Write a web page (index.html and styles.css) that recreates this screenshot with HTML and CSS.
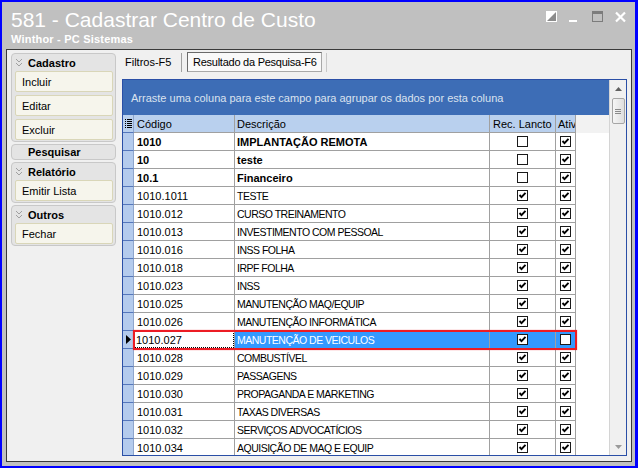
FILE: index.html
```html
<!DOCTYPE html>
<html>
<head>
<meta charset="utf-8">
<link rel="stylesheet" href="styles.css">
</head>
<body>
<div class="win">
  <div class="titlebar">
    <div class="titles">
      <div class="t1">581 - Cadastrar Centro de Custo</div>
      <div class="t2">Winthor - PC Sistemas</div>
    </div>
    <svg class="ctrls" width="81" height="12" viewBox="0 0 81 12">
      <rect x="0" y="0" width="11" height="11" fill="#fff"/>
      <polygon points="10,1 10,10 1,10" fill="#8c8c8c"/>
      <rect x="23" y="9" width="8" height="2" fill="#fff"/>
      <rect x="46.5" y="0.5" width="10" height="10" fill="none" stroke="#7c7c7c"/>
      <rect x="46" y="0" width="11" height="3" fill="#7c7c7c"/>
      <path d="M70 1.5l9 9M79 1.5l-9 9" stroke="#fff" stroke-width="2.2"/>
    </svg>
  </div>
  <div class="frame">
    <div class="left">
      <div class="grp">
        <div class="gh"><svg class="chev" width="8" height="9" viewBox="0 0 8 9"><path d="M1 1l3 3 3-3M1 5l3 3 3-3" fill="none" stroke="#a0a0a0"/></svg><span>Cadastro</span></div>
        <div class="btn">Incluir</div>
        <div class="btn">Editar</div>
        <div class="btn">Excluir</div>
      </div>
      <div class="grp solo">
        <div class="gh nochev"><span>Pesquisar</span></div>
      </div>
      <div class="grp">
        <div class="gh"><svg class="chev" width="8" height="9" viewBox="0 0 8 9"><path d="M1 1l3 3 3-3M1 5l3 3 3-3" fill="none" stroke="#a0a0a0"/></svg><span>Relatório</span></div>
        <div class="btn">Emitir Lista</div>
      </div>
      <div class="grp">
        <div class="gh"><svg class="chev" width="8" height="9" viewBox="0 0 8 9"><path d="M1 1l3 3 3-3M1 5l3 3 3-3" fill="none" stroke="#a0a0a0"/></svg><span>Outros</span></div>
        <div class="btn">Fechar</div>
      </div>
    </div>
    <div class="right">
      <div class="tabs">
        <div class="tab">Filtros-F5</div>
        <div class="tsep"></div>
        <div class="tab active">Resultado da Pesquisa-F6</div>
        <div class="tsep light"></div>
      </div>
      <div class="grid">
        <div class="gmain">
          <div class="gpanel">Arraste uma coluna para este campo para agrupar os dados por esta coluna</div>
          <div class="row head">
            <div class="c ind"><svg width="7" height="9" viewBox="0 0 7 9"><g fill="#000"><rect x="0" y="0" width="1" height="1"/><rect x="2" y="0" width="5" height="1"/><rect x="0" y="2" width="1" height="1"/><rect x="2" y="2" width="5" height="1"/><rect x="0" y="4" width="1" height="1"/><rect x="2" y="4" width="5" height="1"/><rect x="0" y="6" width="1" height="1"/><rect x="2" y="6" width="5" height="1"/><rect x="0" y="8" width="1" height="1"/><rect x="2" y="8" width="5" height="1"/></g></svg></div>
            <div class="c cod">Código</div>
            <div class="c dsc">Descrição</div>
            <div class="c rec">Rec. Lancto</div>
            <div class="c atv">Ativo</div>
            <div class="c fill"></div>
          </div>
          <div class="gbody">
            <div class="row b"><div class="c ind"></div><div class="c cod">1010</div><div class="c dsc">IMPLANTAÇÃO REMOTA</div><div class="c ck"><svg class="cb" width="11" height="11"><rect x="0.5" y="0.5" width="10" height="10" fill="#fff" stroke="#1a1a1a"/></svg></div><div class="c ck"><svg class="cb" width="11" height="11"><rect x="0.5" y="0.5" width="10" height="10" fill="#fff" stroke="#1a1a1a"/><path d="M2.5 5l2 2.2 4-4.4" fill="none" stroke="#000" stroke-width="1.9"/></svg></div><div class="c fill"></div></div>
            <div class="row b"><div class="c ind"></div><div class="c cod">10</div><div class="c dsc">teste</div><div class="c ck"><svg class="cb" width="11" height="11"><rect x="0.5" y="0.5" width="10" height="10" fill="#fff" stroke="#1a1a1a"/></svg></div><div class="c ck"><svg class="cb" width="11" height="11"><rect x="0.5" y="0.5" width="10" height="10" fill="#fff" stroke="#1a1a1a"/><path d="M2.5 5l2 2.2 4-4.4" fill="none" stroke="#000" stroke-width="1.9"/></svg></div><div class="c fill"></div></div>
            <div class="row b"><div class="c ind"></div><div class="c cod">10.1</div><div class="c dsc">Financeiro</div><div class="c ck"><svg class="cb" width="11" height="11"><rect x="0.5" y="0.5" width="10" height="10" fill="#fff" stroke="#1a1a1a"/></svg></div><div class="c ck"><svg class="cb" width="11" height="11"><rect x="0.5" y="0.5" width="10" height="10" fill="#fff" stroke="#1a1a1a"/><path d="M2.5 5l2 2.2 4-4.4" fill="none" stroke="#000" stroke-width="1.9"/></svg></div><div class="c fill"></div></div>
            <div class="row"><div class="c ind"></div><div class="c cod">1010.1011</div><div class="c dsc">TESTE</div><div class="c ck"><svg class="cb" width="11" height="11"><rect x="0.5" y="0.5" width="10" height="10" fill="#fff" stroke="#1a1a1a"/><path d="M2.5 5l2 2.2 4-4.4" fill="none" stroke="#000" stroke-width="1.9"/></svg></div><div class="c ck"><svg class="cb" width="11" height="11"><rect x="0.5" y="0.5" width="10" height="10" fill="#fff" stroke="#1a1a1a"/><path d="M2.5 5l2 2.2 4-4.4" fill="none" stroke="#000" stroke-width="1.9"/></svg></div><div class="c fill"></div></div>
            <div class="row"><div class="c ind"></div><div class="c cod">1010.012</div><div class="c dsc">CURSO TREINAMENTO</div><div class="c ck"><svg class="cb" width="11" height="11"><rect x="0.5" y="0.5" width="10" height="10" fill="#fff" stroke="#1a1a1a"/><path d="M2.5 5l2 2.2 4-4.4" fill="none" stroke="#000" stroke-width="1.9"/></svg></div><div class="c ck"><svg class="cb" width="11" height="11"><rect x="0.5" y="0.5" width="10" height="10" fill="#fff" stroke="#1a1a1a"/><path d="M2.5 5l2 2.2 4-4.4" fill="none" stroke="#000" stroke-width="1.9"/></svg></div><div class="c fill"></div></div>
            <div class="row"><div class="c ind"></div><div class="c cod">1010.013</div><div class="c dsc">INVESTIMENTO COM PESSOAL</div><div class="c ck"><svg class="cb" width="11" height="11"><rect x="0.5" y="0.5" width="10" height="10" fill="#fff" stroke="#1a1a1a"/><path d="M2.5 5l2 2.2 4-4.4" fill="none" stroke="#000" stroke-width="1.9"/></svg></div><div class="c ck"><svg class="cb" width="11" height="11"><rect x="0.5" y="0.5" width="10" height="10" fill="#fff" stroke="#1a1a1a"/><path d="M2.5 5l2 2.2 4-4.4" fill="none" stroke="#000" stroke-width="1.9"/></svg></div><div class="c fill"></div></div>
            <div class="row"><div class="c ind"></div><div class="c cod">1010.016</div><div class="c dsc">INSS FOLHA</div><div class="c ck"><svg class="cb" width="11" height="11"><rect x="0.5" y="0.5" width="10" height="10" fill="#fff" stroke="#1a1a1a"/><path d="M2.5 5l2 2.2 4-4.4" fill="none" stroke="#000" stroke-width="1.9"/></svg></div><div class="c ck"><svg class="cb" width="11" height="11"><rect x="0.5" y="0.5" width="10" height="10" fill="#fff" stroke="#1a1a1a"/><path d="M2.5 5l2 2.2 4-4.4" fill="none" stroke="#000" stroke-width="1.9"/></svg></div><div class="c fill"></div></div>
            <div class="row"><div class="c ind"></div><div class="c cod">1010.018</div><div class="c dsc">IRPF FOLHA</div><div class="c ck"><svg class="cb" width="11" height="11"><rect x="0.5" y="0.5" width="10" height="10" fill="#fff" stroke="#1a1a1a"/><path d="M2.5 5l2 2.2 4-4.4" fill="none" stroke="#000" stroke-width="1.9"/></svg></div><div class="c ck"><svg class="cb" width="11" height="11"><rect x="0.5" y="0.5" width="10" height="10" fill="#fff" stroke="#1a1a1a"/><path d="M2.5 5l2 2.2 4-4.4" fill="none" stroke="#000" stroke-width="1.9"/></svg></div><div class="c fill"></div></div>
            <div class="row"><div class="c ind"></div><div class="c cod">1010.023</div><div class="c dsc">INSS</div><div class="c ck"><svg class="cb" width="11" height="11"><rect x="0.5" y="0.5" width="10" height="10" fill="#fff" stroke="#1a1a1a"/><path d="M2.5 5l2 2.2 4-4.4" fill="none" stroke="#000" stroke-width="1.9"/></svg></div><div class="c ck"><svg class="cb" width="11" height="11"><rect x="0.5" y="0.5" width="10" height="10" fill="#fff" stroke="#1a1a1a"/><path d="M2.5 5l2 2.2 4-4.4" fill="none" stroke="#000" stroke-width="1.9"/></svg></div><div class="c fill"></div></div>
            <div class="row"><div class="c ind"></div><div class="c cod">1010.025</div><div class="c dsc">MANUTENÇÃO MAQ/EQUIP</div><div class="c ck"><svg class="cb" width="11" height="11"><rect x="0.5" y="0.5" width="10" height="10" fill="#fff" stroke="#1a1a1a"/><path d="M2.5 5l2 2.2 4-4.4" fill="none" stroke="#000" stroke-width="1.9"/></svg></div><div class="c ck"><svg class="cb" width="11" height="11"><rect x="0.5" y="0.5" width="10" height="10" fill="#fff" stroke="#1a1a1a"/><path d="M2.5 5l2 2.2 4-4.4" fill="none" stroke="#000" stroke-width="1.9"/></svg></div><div class="c fill"></div></div>
            <div class="row"><div class="c ind"></div><div class="c cod">1010.026</div><div class="c dsc">MANUTENÇÃO INFORMÁTICA</div><div class="c ck"><svg class="cb" width="11" height="11"><rect x="0.5" y="0.5" width="10" height="10" fill="#fff" stroke="#1a1a1a"/><path d="M2.5 5l2 2.2 4-4.4" fill="none" stroke="#000" stroke-width="1.9"/></svg></div><div class="c ck"><svg class="cb" width="11" height="11"><rect x="0.5" y="0.5" width="10" height="10" fill="#fff" stroke="#1a1a1a"/><path d="M2.5 5l2 2.2 4-4.4" fill="none" stroke="#000" stroke-width="1.9"/></svg></div><div class="c fill"></div></div>
            <div class="row sel"><div class="c ind"><svg width="5" height="9" viewBox="0 0 5 9"><polygon points="0,0 5,4.5 0,9" fill="#000"/></svg></div><div class="c cod"><span class="focus">1010.027</span></div><div class="c dsc">MANUTENÇÃO DE VEICULOS</div><div class="c ck"><svg class="cb" width="11" height="11"><rect x="0.5" y="0.5" width="10" height="10" fill="#fff" stroke="#1a1a1a"/><path d="M2.5 5l2 2.2 4-4.4" fill="none" stroke="#000" stroke-width="1.9"/></svg></div><div class="c ck"><svg class="cb" width="11" height="11"><rect x="0.5" y="0.5" width="10" height="10" fill="#fff" stroke="#1a1a1a"/></svg></div><div class="c fill"></div></div>
            <div class="row"><div class="c ind"></div><div class="c cod">1010.028</div><div class="c dsc">COMBUSTÍVEL</div><div class="c ck"><svg class="cb" width="11" height="11"><rect x="0.5" y="0.5" width="10" height="10" fill="#fff" stroke="#1a1a1a"/><path d="M2.5 5l2 2.2 4-4.4" fill="none" stroke="#000" stroke-width="1.9"/></svg></div><div class="c ck"><svg class="cb" width="11" height="11"><rect x="0.5" y="0.5" width="10" height="10" fill="#fff" stroke="#1a1a1a"/><path d="M2.5 5l2 2.2 4-4.4" fill="none" stroke="#000" stroke-width="1.9"/></svg></div><div class="c fill"></div></div>
            <div class="row"><div class="c ind"></div><div class="c cod">1010.029</div><div class="c dsc">PASSAGENS</div><div class="c ck"><svg class="cb" width="11" height="11"><rect x="0.5" y="0.5" width="10" height="10" fill="#fff" stroke="#1a1a1a"/><path d="M2.5 5l2 2.2 4-4.4" fill="none" stroke="#000" stroke-width="1.9"/></svg></div><div class="c ck"><svg class="cb" width="11" height="11"><rect x="0.5" y="0.5" width="10" height="10" fill="#fff" stroke="#1a1a1a"/><path d="M2.5 5l2 2.2 4-4.4" fill="none" stroke="#000" stroke-width="1.9"/></svg></div><div class="c fill"></div></div>
            <div class="row"><div class="c ind"></div><div class="c cod">1010.030</div><div class="c dsc">PROPAGANDA E MARKETING</div><div class="c ck"><svg class="cb" width="11" height="11"><rect x="0.5" y="0.5" width="10" height="10" fill="#fff" stroke="#1a1a1a"/><path d="M2.5 5l2 2.2 4-4.4" fill="none" stroke="#000" stroke-width="1.9"/></svg></div><div class="c ck"><svg class="cb" width="11" height="11"><rect x="0.5" y="0.5" width="10" height="10" fill="#fff" stroke="#1a1a1a"/><path d="M2.5 5l2 2.2 4-4.4" fill="none" stroke="#000" stroke-width="1.9"/></svg></div><div class="c fill"></div></div>
            <div class="row"><div class="c ind"></div><div class="c cod">1010.031</div><div class="c dsc">TAXAS DIVERSAS</div><div class="c ck"><svg class="cb" width="11" height="11"><rect x="0.5" y="0.5" width="10" height="10" fill="#fff" stroke="#1a1a1a"/><path d="M2.5 5l2 2.2 4-4.4" fill="none" stroke="#000" stroke-width="1.9"/></svg></div><div class="c ck"><svg class="cb" width="11" height="11"><rect x="0.5" y="0.5" width="10" height="10" fill="#fff" stroke="#1a1a1a"/><path d="M2.5 5l2 2.2 4-4.4" fill="none" stroke="#000" stroke-width="1.9"/></svg></div><div class="c fill"></div></div>
            <div class="row"><div class="c ind"></div><div class="c cod">1010.032</div><div class="c dsc">SERVIÇOS ADVOCATÍCIOS</div><div class="c ck"><svg class="cb" width="11" height="11"><rect x="0.5" y="0.5" width="10" height="10" fill="#fff" stroke="#1a1a1a"/><path d="M2.5 5l2 2.2 4-4.4" fill="none" stroke="#000" stroke-width="1.9"/></svg></div><div class="c ck"><svg class="cb" width="11" height="11"><rect x="0.5" y="0.5" width="10" height="10" fill="#fff" stroke="#1a1a1a"/><path d="M2.5 5l2 2.2 4-4.4" fill="none" stroke="#000" stroke-width="1.9"/></svg></div><div class="c fill"></div></div>
            <div class="row"><div class="c ind"></div><div class="c cod">1010.034</div><div class="c dsc">AQUISIÇÃO DE MAQ E EQUIP</div><div class="c ck"><svg class="cb" width="11" height="11"><rect x="0.5" y="0.5" width="10" height="10" fill="#fff" stroke="#1a1a1a"/><path d="M2.5 5l2 2.2 4-4.4" fill="none" stroke="#000" stroke-width="1.9"/></svg></div><div class="c ck"><svg class="cb" width="11" height="11"><rect x="0.5" y="0.5" width="10" height="10" fill="#fff" stroke="#1a1a1a"/><path d="M2.5 5l2 2.2 4-4.4" fill="none" stroke="#000" stroke-width="1.9"/></svg></div><div class="c fill"></div></div>
          </div>
        </div>
        <div class="vscroll">
          <div class="arrow"><svg width="7" height="4" viewBox="0 0 7 4"><polygon points="0,4 3.5,0 7,4" fill="#606060"/></svg></div>
          <div class="thumb"><svg width="6" height="5" viewBox="0 0 6 5"><path d="M0 0.5h6M0 2.5h6M0 4.5h6" stroke="#8a8a8a"/></svg></div>
          <div class="sp"></div>
          <div class="arrow"><svg width="7" height="4" viewBox="0 0 7 4"><polygon points="0,0 3.5,4 7,0" fill="#9a9a9a"/></svg></div>
        </div>
      </div>
    </div>
  </div>
</div>
</body>
</html>
```

FILE: styles.css
```css
html, body {
  margin: 0;
  padding: 0;
}
body {
  font-family: "Liberation Sans", Tahoma, Arial, sans-serif;
  font-size: 11px;
  color: #000;
  background: #0000ff;
}
.win {
  width: 638px;
  height: 468px;
  box-sizing: border-box;
  border: solid #0000ff;
  border-width: 2px 3px 2px 2px;
  background: #c0c0c0;
  padding: 0 3px 4px 4px;
  display: flex;
  flex-direction: column;
}
.titlebar {
  height: 47px;
  flex: none;
  display: flex;
  padding: 0 5px 0 5px;
}
.titles {
  flex: 1;
  padding-top: 6px;
  color: #fff;
}
.t1 {
  font-size: 21px;
  line-height: 24px;
}
.t2 {
  font-weight: bold;
  font-size: 11px;
  line-height: 13px;
  margin-top: 1px;
  letter-spacing: 0.2px;
}
.ctrls {
  margin-top: 9px;
  flex: none;
}
.frame {
  height: 413px;
  flex: none;
  box-sizing: border-box;
  border: 1px solid #3a3a3a;
  background: #f0f0f0;
  display: flex;
}
.left {
  width: 111px;
  flex: none;
  box-sizing: border-box;
  padding: 3px 0 0 4px;
  display: flex;
  flex-direction: column;
  gap: 2px;
}
.grp {
  width: 105px;
  box-sizing: border-box;
  border: 1px solid #c8c8c8;
  border-radius: 4px;
  background: #e4e4e4;
  padding: 0 2px 1px 3px;
  display: flex;
  flex-direction: column;
  gap: 3px;
}
.grp.solo {
  padding-bottom: 0;
}
.gh {
  height: 17px;
  margin-bottom: -3px;
  display: flex;
  align-items: center;
  font-weight: bold;
  font-size: 11px;
}
.solo .gh {
  height: 14px;
  margin-bottom: 0;
  padding-left: 13px;
}
.chev {
  margin-right: 5px;
  flex: none;
}
.btn {
  height: 21px;
  box-sizing: border-box;
  border: 1px solid #d9d6b8;
  border-radius: 2px;
  background: #f6f5ec;
  padding-left: 6px;
  display: flex;
  align-items: center;
}
.right {
  flex: 1;
  min-width: 0;
  box-sizing: border-box;
  padding: 2px 4px 5px 4px;
  display: flex;
  flex-direction: column;
}
.tabs {
  height: 20px;
  flex: none;
  margin-bottom: 7px;
  display: flex;
  align-items: stretch;
}
.tab {
  display: flex;
  align-items: center;
  white-space: nowrap;
}
.tab:first-child {
  width: 56px;
  padding-left: 3px;
}
.tsep {
  width: 1px;
  background: #a0a0a0;
  margin-top: 1px;
}
.tsep.light {
  background: #c8c8c8;
  margin-left: 4px;
}
.tab.active {
  width: 135px;
  box-sizing: border-box;
  margin-left: 5px;
  padding-left: 5px;
  border: 1px solid #a8a8a8;
  border-top-color: #6a6a6a;
  border-left-color: #6a6a6a;
  background: #f9f9f9;
  letter-spacing: -0.25px;
  overflow: hidden;
}
.grid {
  flex: 1;
  min-height: 0;
  border: 1px solid #2a4fa6;
  display: flex;
  overflow: hidden;
  background: #fff;
}
.gmain {
  flex: 1;
  min-width: 0;
  display: flex;
  flex-direction: column;
}
.gpanel {
  height: 35px;
  flex: none;
  background: #3d6db6;
  color: #dbe3ef;
  padding-left: 8px;
  display: flex;
  align-items: center;
  white-space: nowrap;
}
.gbody {
  flex: 1;
  min-height: 0;
  overflow: hidden;
}
.row {
  height: 18px;
  display: grid;
  grid-template-columns: 11px 101px 255px 66px 20px 1fr;
}
.c {
  box-sizing: border-box;
  border-right: 1px solid #a0a0a0;
  border-bottom: 1px solid #a0a0a0;
  display: flex;
  align-items: center;
  white-space: nowrap;
  overflow: hidden;
  background: #fff;
}
.c.ind {
  background: #b4cbed;
  border-right: 1px solid #8fa6cc;
  border-bottom: 1px solid #5577bb;
  padding-left: 2px;
}
.c.fill {
  border: none;
}
.c.cod {
  padding-left: 3px;
}
.c.dsc {
  padding-left: 2px;
}
.row:not(.head):not(.b) .c.dsc {
  font-size: 10.5px;
  letter-spacing: -0.5px;
}
.c.ck {
  justify-content: center;
}
.row.b .c.cod,
.row.b .c.dsc {
  font-weight: bold;
}
.row.head .c {
  background: #b9d0ee;
}
.row.head .c.rec {
  padding-left: 3px;
}
.row.head .c.atv {
  padding-left: 2px;
}
.row.head .c.ind {
  padding-left: 2px;
}
.row.head .c.fill {
  background: #f2f2f2;
}
.row.sel {
  position: relative;
}
.row.sel .c.dsc,
.row.sel .c.ck {
  background: #3399ff;
  color: #fff;
}
.row.sel .c.ind {
  padding-left: 3px;
}
.row.sel .c.cod {
  padding: 0;
}
.focus {
  flex: 1;
  align-self: stretch;
  display: flex;
  align-items: center;
  padding-left: 2px;
  outline: 1px dotted #000;
  outline-offset: -1px;
}
.row.sel::after {
  content: "";
  position: absolute;
  left: 10px;
  top: -1px;
  width: 444px;
  height: 20px;
  box-sizing: border-box;
  border: 2px solid #ec1c24;
  box-shadow: 0 0 1px rgba(236, 28, 36, 0.6);
  pointer-events: none;
}
.cb {
  display: block;
}
.vscroll {
  width: 17px;
  flex: none;
  box-sizing: border-box;
  border-left: 1px solid #d4d4d4;
  background: #f0f0f0;
  display: flex;
  flex-direction: column;
  align-items: center;
}
.arrow {
  height: 17px;
  display: flex;
  align-items: center;
  justify-content: center;
}
.thumb {
  width: 13px;
  height: 26px;
  margin-top: 1px;
  box-sizing: border-box;
  border: 1px solid #a6a6a6;
  border-radius: 2px;
  background: linear-gradient(to right, #f6f6f6, #dedede);
  display: flex;
  align-items: center;
  justify-content: center;
}
.sp {
  flex: 1;
}
```
